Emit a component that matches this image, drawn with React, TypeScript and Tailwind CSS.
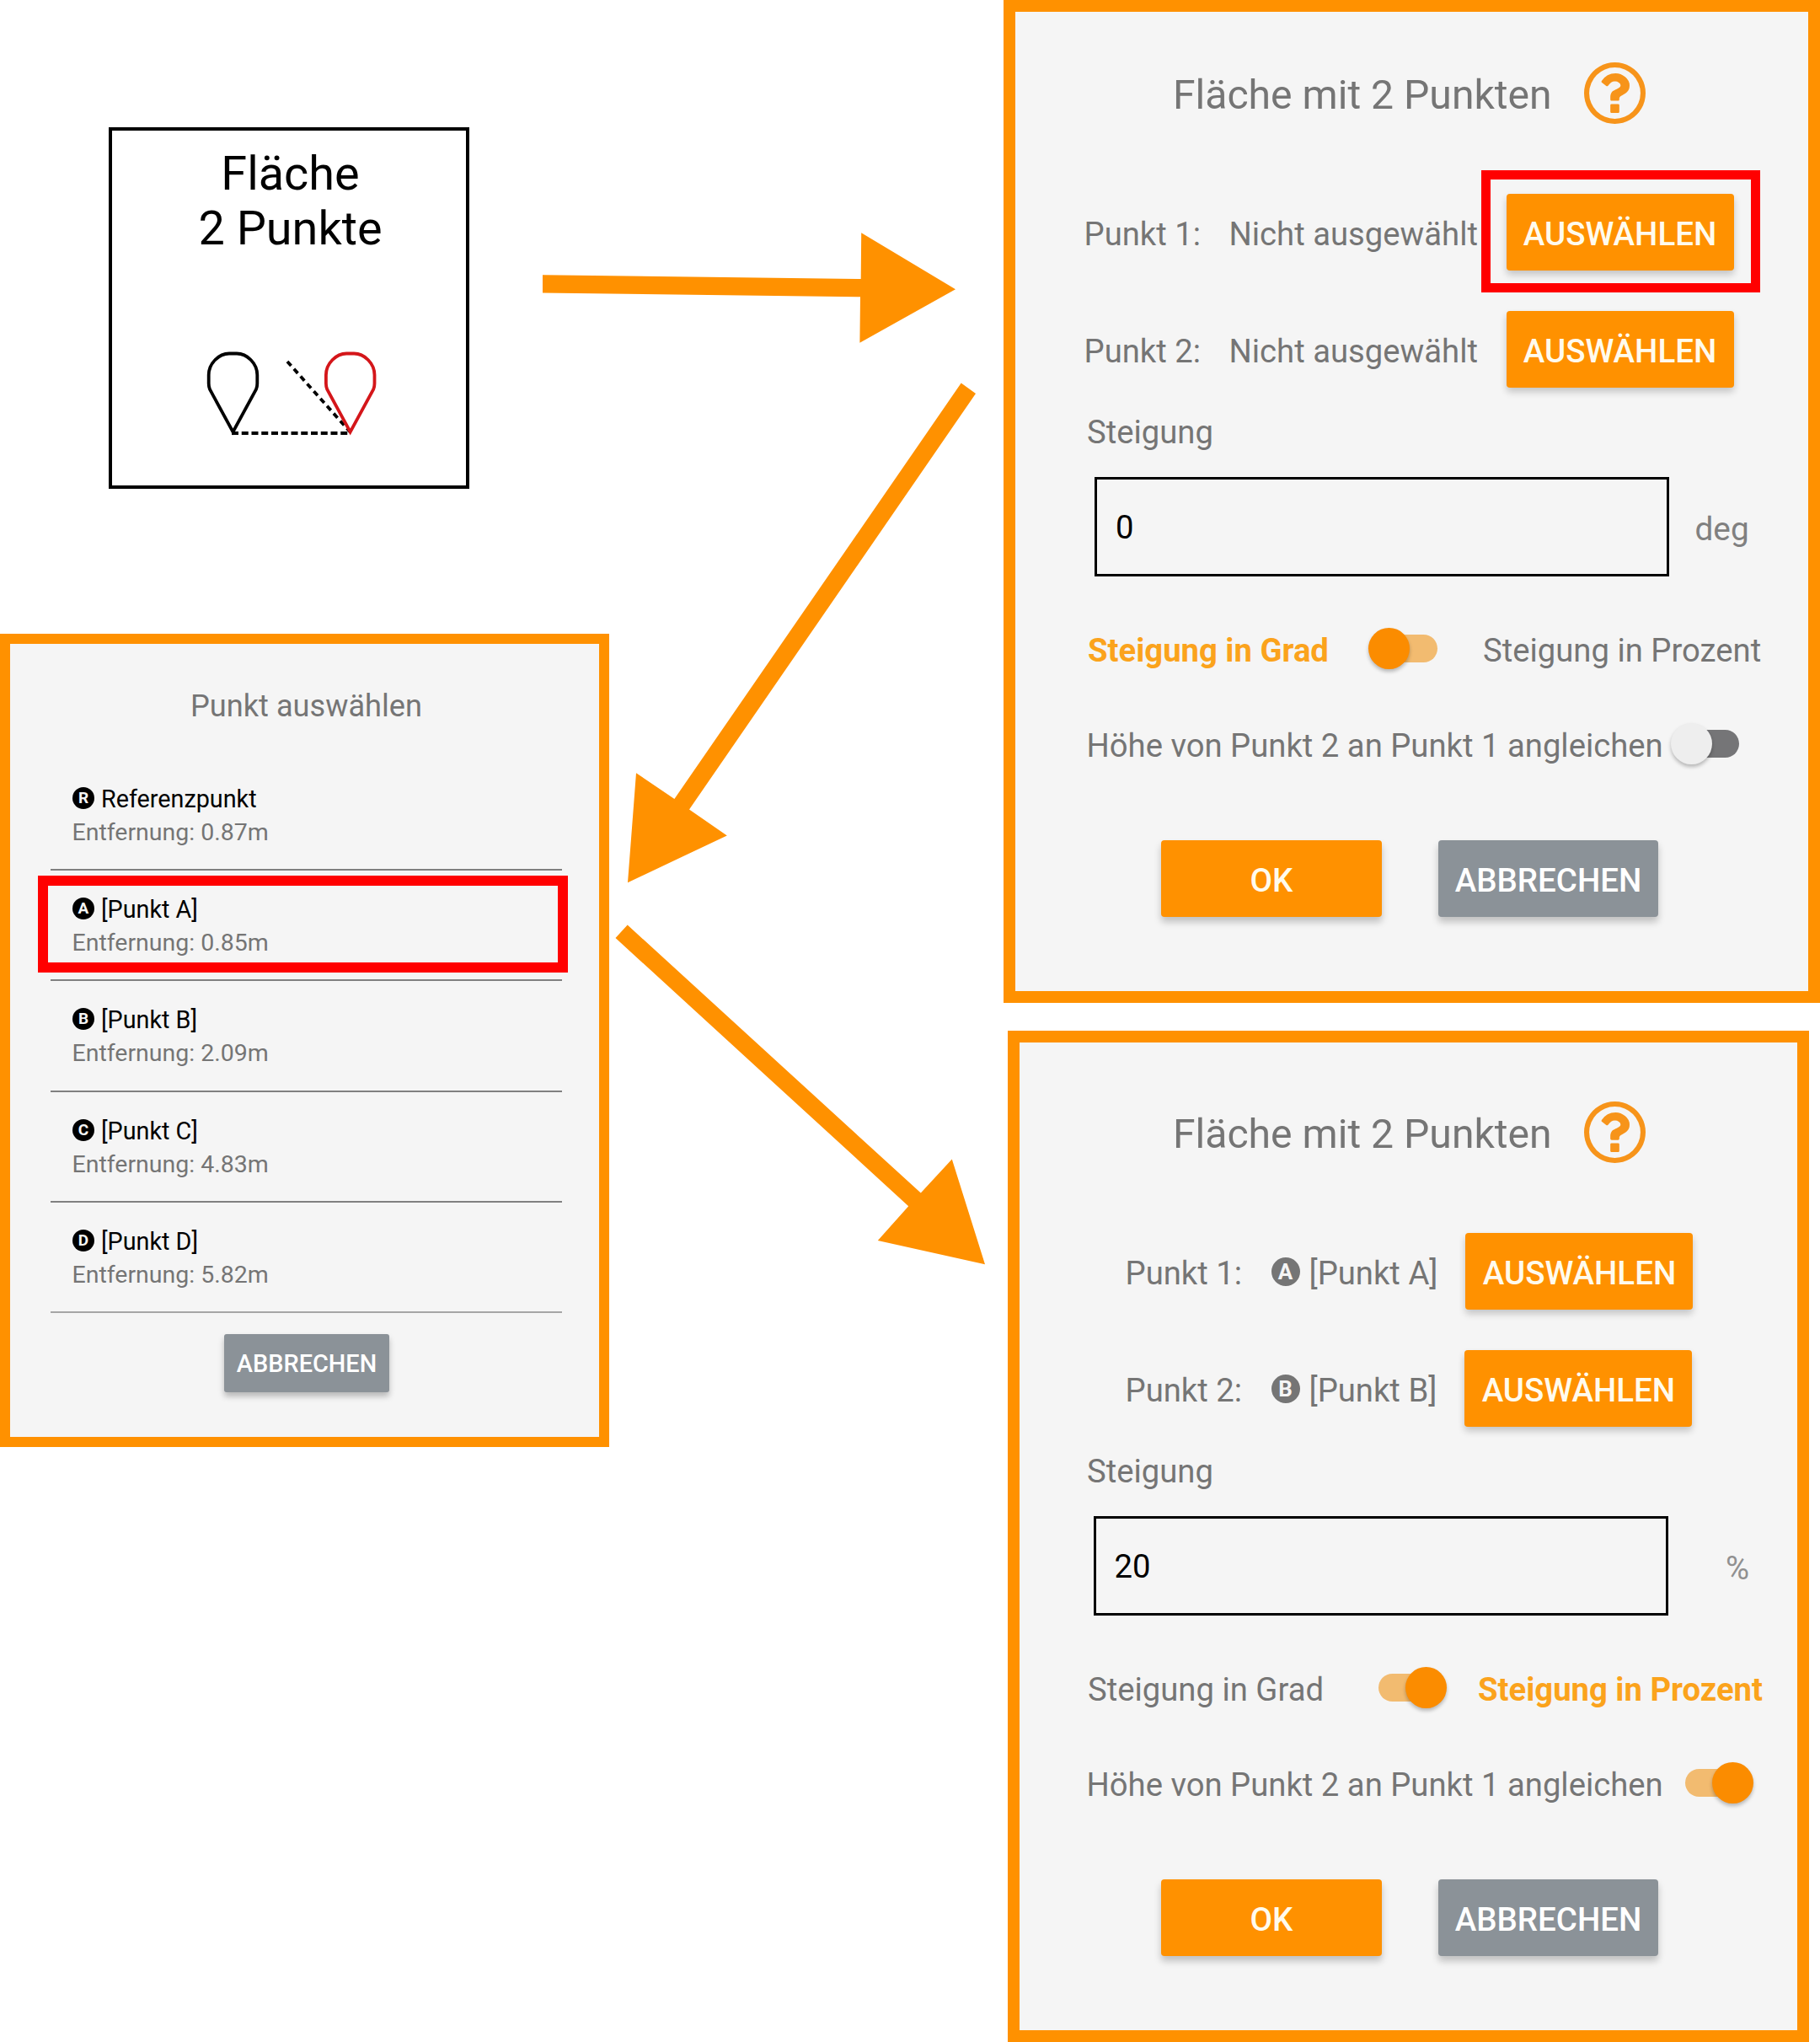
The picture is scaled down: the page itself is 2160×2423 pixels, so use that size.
import type { ReactNode } from "react";

function HelpIcon() {
  return (
    <svg viewBox="0 -1408 1536 1536" className="mt-px h-[73px] w-[73px] shrink-0 fill-[#f7941a]" aria-label="Hilfe">
      <path
        transform="scale(1 -1)"
        d="M880 336v-160q0-14-9-23t-23-9h-160q-14 0-23 9t-9 23v160q0 14 9 23t23 9h160q14 0 23-9t9-23zM1136 832q0-50-15-90t-45.5-69-52-44-59.5-36q-32-18-46.5-28t-26-24-11.5-29v-32q0-14-9-23t-23-9h-160q-14 0-23 9t-9 23v68q0 35 10.5 64.5t24 47.5 39 35.5 41 25.5 44.5 21q53 25 75 43t22 49q0 42-43.5 71.5t-95.5 29.5q-56 0-95-27-29-20-80-83-9-12-25-12-11 0-19 6l-108 82q-10 7-12 20t5 23q122 192 349 192 129 0 238.5-89.5t109.5-214.5zM768 1280q-130 0-248.5-51t-204-136.5-136.5-204-51-248.5 51-248.5 136.5-204 204-136.5 248.5-51 248.5 51 204 136.5 136.5 204 51 248.5-51 248.5-136.5 204-204 136.5-248.5 51zM1536 640q0-209-103-385.5t-279.5-279.5-385.5-103-385.5 103-279.5 279.5-103 385.5 103 385.5 279.5 279.5 385.5 103 385.5-103 279.5-279.5 103-385.5z"
      />
    </svg>
  );
}

type SwitchProps = { side: "left" | "right"; muted?: boolean };

function Switch({ side, muted = false }: SwitchProps) {
  return (
    <div className={`relative flex h-[49px] w-[81.5px] shrink-0 items-center ${side === "left" ? "justify-end" : "justify-start"}`}>
      <div className={`h-[33px] w-[66px] rounded-full ${muted ? "bg-[#757577]" : "bg-[#f2bb70]"}`} />
      <div
        className={`absolute top-0 h-[49px] w-[49px] rounded-full shadow-[0_3px_4px_rgba(0,0,0,0.25)] ${
          side === "left" ? "left-0" : "right-0"
        } ${muted ? "bg-[#eeeeee]" : "bg-[#fb8c00]"}`}
      />
    </div>
  );
}

function SelectButton({ highlighted = false }: { highlighted?: boolean }) {
  return (
    <div className="relative shrink-0">
      <button className="flex h-[91px] w-[270px] items-center justify-center rounded-[4px] bg-[#ff9100] pt-[4px] text-[38.5px] leading-[44px] font-medium text-[#fffbee] shadow-[0_5px_8px_rgba(0,0,0,0.2)]">
        AUSWÄHLEN
      </button>
      {highlighted && <div className="absolute -top-[28px] -right-[31px] -bottom-[26px] -left-[30px] border-[11.5px] border-[#ff0000]" />}
    </div>
  );
}

function ActionRow() {
  return (
    <div className="ml-[173px] flex gap-[67px] text-[38.5px] leading-[44px] font-medium text-white">
      <button className="flex h-[91px] w-[262px] items-center justify-center rounded-[4px] bg-[#ff9100] pt-[4px] text-[#fffbee] shadow-[0_6px_9px_rgba(0,0,0,0.22)]">
        OK
      </button>
      <button className="flex h-[91px] w-[261px] items-center justify-center rounded-[4px] bg-[#8b9298] pt-[4px] shadow-[0_6px_9px_rgba(0,0,0,0.22)]">
        ABBRECHEN
      </button>
    </div>
  );
}

function LargeMark({ letter }: { letter: string }) {
  return (
    <span className="mr-[11px] flex h-[34px] w-[34px] items-center justify-center rounded-full bg-[#757575] text-[26px] leading-[34px] font-bold text-[#f5f5f5]">
      {letter}
    </span>
  );
}

type SurfaceDialogProps = {
  frame: string;
  rows: ReactNode;
  field: ReactNode;
  unit: ReactNode;
  slope: ReactNode;
  align: ReactNode;
};

function SurfaceDialog({ frame, rows, field, unit, slope, align }: SurfaceDialogProps) {
  return (
    <section className={`border-[14px] border-[#ff9100] bg-[#f5f5f5] text-[38.25px] leading-[44px] text-[#757575] ${frame}`}>
      <header className="flex h-[73px] items-center pl-[187px]">
        <h2 className="w-[488px] pt-[6px] text-[48.1px] leading-[56px] whitespace-nowrap">Fläche mit 2 Punkten</h2>
        <HelpIcon />
      </header>
      <div className="mt-[84px] flex flex-col gap-[48px]">{rows}</div>
      <p className="mt-[31px] ml-[85px]">Steigung</p>
      <div className="mt-[31px] flex h-[118px] items-center">
        {field}
        {unit}
      </div>
      <div className="mt-[61px] flex h-[49px] items-center whitespace-nowrap">{slope}</div>
      <div className="mt-[64px] mb-[90px] flex h-[49px] items-center whitespace-nowrap">{align}</div>
      <ActionRow />
    </section>
  );
}

function DialogEmpty() {
  return (
    <SurfaceDialog
      frame="h-[1190px] w-[969px] pt-[59px]"
      rows={["Punkt 1:", "Punkt 2:"].map((label, i) => (
        <div key={label} className="flex h-[91px] items-center whitespace-nowrap">
          <span className="ml-[81.5px] w-[172px] pt-[4px]">{label}</span>
          <span className="w-[329px] pt-[4px]">Nicht ausgewählt</span>
          <SelectButton highlighted={i === 0} />
        </div>
      ))}
      field={
        <div className="ml-[94px] flex h-[118px] w-[682px] items-center border-[3px] border-black pt-[2px] pl-[22px] text-black">0</div>
      }
      unit={<span className="ml-[30.5px] pt-[5px] text-[38.75px] text-[#808080]">deg</span>}
      slope={
        <>
          <span className="ml-[86px] w-[333px] pt-[5px] font-bold text-[#fba31c]">Steigung in Grad</span>
          <Switch side="left" />
          <span className="ml-[54.5px] pt-[5px]">Steigung in Prozent</span>
        </>
      }
      align={
        <>
          <span className="ml-[82.5px] w-[695px] pt-[5px] pl-[2px]">Höhe von Punkt 2 an Punkt 1 angleichen</span>
          <Switch side="left" muted />
        </>
      }
    />
  );
}

function DialogFilled() {
  return (
    <SurfaceDialog
      frame="ml-[5px] h-[1200px] w-[951px] pt-[69px] [&>*]:-translate-x-[5px]"
      rows={["A", "B"].map((letter, i) => (
        <div key={letter} className="flex h-[91px] items-center whitespace-nowrap">
          <span className="ml-[130.5px] w-[173px] pt-[4px]">{`Punkt ${i + 1}:`}</span>
          <LargeMark letter={letter} />
          <span className="mr-[33px] pt-[4px]">[Punkt {letter}]</span>
          <SelectButton />
        </div>
      ))}
      field={
        <div className="ml-[93px] flex h-[118px] w-[682px] items-center border-[3px] border-black pt-[2px] pl-[21.5px] text-black">20</div>
      }
      unit={<span className="ml-[68px] pt-[5px] text-[#909090]">%</span>}
      slope={
        <>
          <span className="ml-[86px] w-[344.5px] pt-[5px]">Steigung in Grad</span>
          <Switch side="right" />
          <span className="ml-[37px] pt-[5px] font-bold text-[#fba31c]">Steigung in Prozent</span>
        </>
      }
      align={
        <>
          <span className="ml-[82.5px] w-[712px] pt-[5px] pl-[2px]">Höhe von Punkt 2 an Punkt 1 angleichen</span>
          <Switch side="right" />
        </>
      }
    />
  );
}

const points = [
  { letter: "R", name: "Referenzpunkt", distance: "0.87m" },
  { letter: "A", name: "[Punkt A]", distance: "0.85m" },
  { letter: "B", name: "[Punkt B]", distance: "2.09m" },
  { letter: "C", name: "[Punkt C]", distance: "4.83m" },
  { letter: "D", name: "[Punkt D]", distance: "5.82m" },
];

function PointPicker() {
  return (
    <section className="mt-[172px] h-[965px] w-[723px] border-[12px] border-[#ff9100] bg-[#f5f5f5] text-[28.75px] leading-[40px] text-[#757575]">
      <h2 className="mt-[54px] ml-[4px] text-center text-[36.2px]">Punkt auswählen</h2>
      <ul className="mt-[44px] mr-[44px] ml-[47.5px]">
        {points.map(({ letter, name, distance }) => (
          <li
            key={letter}
            className="relative h-[131.2px] border-b-2 border-[#808080] pt-[26px] pl-[26.5px] last:border-[#a6a6a6]"
          >
            <div className="flex h-[40px] items-center text-black">
              <span className="mr-[8px] mb-[2px] flex h-[26px] w-[26px] items-center justify-center rounded-full bg-black text-[19px] leading-[26px] font-bold text-[#f5f5f5]">
                {letter}
              </span>
              {name}
            </div>
            <div className="-ml-[0.5px] text-[28.5px]">Entfernung: {distance}</div>
            {letter === "A" && (
              <div className="absolute top-[6px] -right-[7px] -left-[14.5px] h-[115px] border-[12px] border-[#ff0000]" />
            )}
          </li>
        ))}
      </ul>
      <button className="mt-[25px] ml-[254px] flex h-[69px] w-[196px] items-center justify-center rounded-[3px] bg-[#8b9298] pt-[2px] text-[28.9px] font-medium text-white shadow-[0_5px_7px_rgba(0,0,0,0.25)]">
        ABBRECHEN
      </button>
    </section>
  );
}

function SurfaceCard() {
  const pin = "M36.5 105.5 L9 55 Q7.7 52 7.7 48 V38 C7.7 24 20 12.5 32 12.5 H41 C53 12.5 65.3 24 65.3 38 V48 Q65.3 52 64 55 Z";
  return (
    <div className="mt-[151px] ml-[129px] flex h-[429px] w-[428px] flex-col items-center border-4 border-black bg-white pt-[19px] text-[55.8px] leading-[65px] text-black">
      <div className="pl-[3px] text-center">
        Fläche
        <br />
        2 Punkte
      </div>
      <svg viewBox="0 0 220 120" className="mt-[103px] ml-[14px] h-[120px] w-[220px]" fill="none" strokeWidth="3.8">
        <path d={pin} stroke="#000" />
        <path d="M35 107 H174.5" stroke="#000" strokeDasharray="8 3.75" />
        <path d="M101 22 L176 106" stroke="#000" strokeWidth="3.8" strokeDasharray="6.8 5" />
        <path d={pin} transform="translate(139.2 0)" stroke="#d4161a" />
      </svg>
    </div>
  );
}

function Arrows() {
  return (
    <svg viewBox="0 0 2160 2423" className="pointer-events-none absolute inset-0 h-[2423px] w-[2160px] fill-[#ff9100]">
      <path d="M644 326.3 L1021.7 331 L1022.2 276.3 L1134 343.3 L1020.4 406.8 L1021 352.3 L644 347.4 Z" />
      <path d="M1140.7 454.6 L1158 467 L818 960.6 L862.8 991.4 L745 1047.3 L755 917.2 L800.4 948 Z" />
      <path d="M744.7 1097.5 L1092.8 1415.6 L1129.8 1375.6 L1169 1500.2 L1041.8 1472 L1078.2 1431.2 L730.5 1113 Z" />
    </svg>
  );
}

export default function App() {
  return (
    <main className="relative flex h-[2423px] w-[2160px] justify-between overflow-hidden bg-white font-['Roboto',sans-serif]">
      <div className="flex flex-col">
        <SurfaceCard />
        <PointPicker />
      </div>
      <div className="flex flex-col gap-[33px]">
        <DialogEmpty />
        <DialogFilled />
      </div>
      <Arrows />
    </main>
  );
}
